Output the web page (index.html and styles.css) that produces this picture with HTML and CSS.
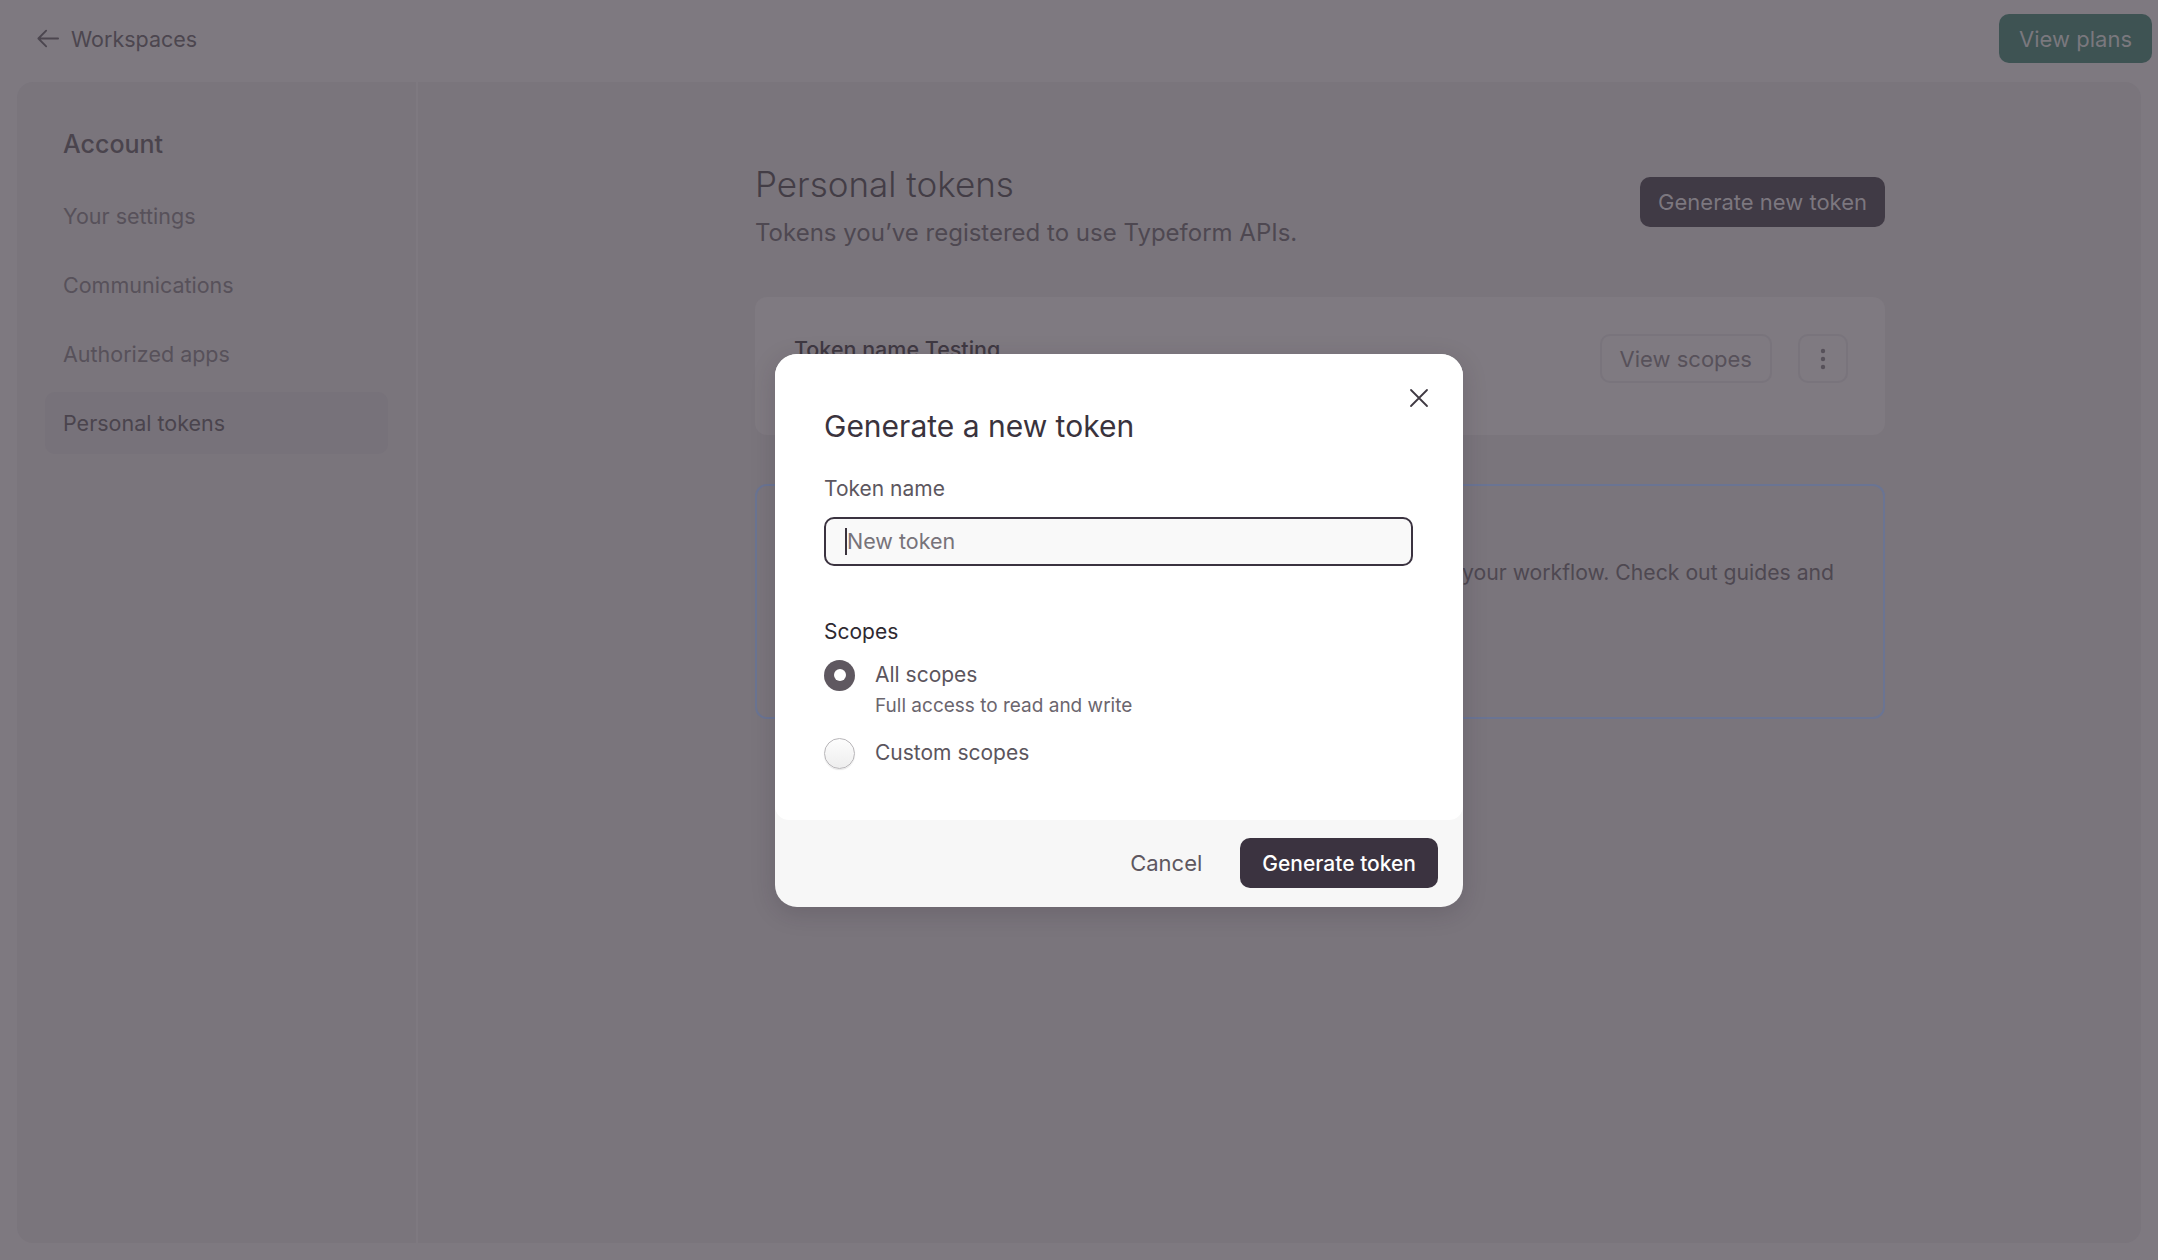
FILE: index.html
```html
<!DOCTYPE html>
<html lang="en">
<head>
    <meta charset="UTF-8">
    <meta name="viewport" content="width=device-width, initial-scale=1.0">
    <title>Personal tokens</title>
    <link rel="stylesheet" href="styles.css">
</head>
<body>
    <header class="topbar">
        <a href="#" class="back-link">
            <svg viewBox="0 0 24 20" fill="none" stroke="currentColor" stroke-width="2" stroke-linecap="round" stroke-linejoin="round">
                <path d="M23 10H1.5M10 1.5L1.5 10l8.5 8.5"/>
            </svg>
            Workspaces
        </a>
        <a href="#" class="plans-btn">View plans</a>
    </header>

    <div class="shell">
        <aside class="sidebar">
            <h3>Account</h3>
            <nav>
                <a href="#">Your settings</a>
                <a href="#">Communications</a>
                <a href="#">Authorized apps</a>
                <a href="#" class="active">Personal tokens</a>
            </nav>
        </aside>

        <main class="content">
            <div class="content-inner">
                <div class="page-head">
                    <div>
                        <h1>Personal tokens</h1>
                        <p>Tokens you’ve registered to use Typeform APIs.</p>
                    </div>
                    <button class="dark-btn">Generate new token</button>
                </div>

                <section class="token-card">
                    <div class="token-info">
                        <div class="token-name">Token name Testing</div>
                        <div class="token-meta">Created on 12 Mar 2024 · Never used</div>
                    </div>
                    <div class="token-actions">
                        <button class="ghost-btn">View scopes</button>
                        <button class="ghost-btn icon-btn" aria-label="More">
                            <svg viewBox="0 0 6 22" fill="currentColor">
                                <circle cx="3" cy="3" r="2.2"/>
                                <circle cx="3" cy="11" r="2.2"/>
                                <circle cx="3" cy="19" r="2.2"/>
                            </svg>
                        </button>
                    </div>
                </section>

                <section class="info-box">
                    <h4>Build with Typeform APIs</h4>
                    <p>Personal tokens let you build custom integrations and automate your workflow. Check out guides and<br>examples in our developer portal.</p>
                    <a href="#" class="info-link">Go to developer docs</a>
                </section>
            </div>
        </main>
    </div>

    <div class="backdrop">
        <div class="modal" role="dialog">
            <div class="modal-body">
                <button class="modal-close" aria-label="Close">
                    <svg viewBox="0 0 20 20" fill="none" stroke="currentColor" stroke-width="1.8" stroke-linecap="round">
                        <path d="M2 2l16 16M18 2L2 18"/>
                    </svg>
                </button>
                <h2>Generate a new token</h2>
                <label class="field-label" for="token-name">Token name</label>
                <div class="input-wrap">
                    <span class="caret"></span>
                    <input id="token-name" type="text" placeholder="New token">
                </div>

                <div class="scopes-title">Scopes</div>
                <div class="radio-row">
                    <span class="radio checked"></span>
                    <span class="radio-text">
                        <span class="radio-label">All scopes</span>
                        <span class="radio-hint">Full access to read and write</span>
                    </span>
                </div>
                <div class="radio-row">
                    <span class="radio"></span>
                    <span class="radio-text">
                        <span class="radio-label">Custom scopes</span>
                    </span>
                </div>
            </div>
            <div class="modal-footer">
                <button class="text-btn">Cancel</button>
                <button class="primary-btn">Generate token</button>
            </div>
        </div>
    </div>
</body>
</html>
```

FILE: styles.css
```css
* {
    box-sizing: border-box;
}

body {
    margin: 0;
    height: 100vh;
    overflow: hidden;
    position: relative;
    background: #7e7980;
    font-family: 'Inter', 'Noto Sans', sans-serif;
    font-size: 22px;
    color: #4a444d;
}

button {
    font-family: inherit;
    cursor: pointer;
}

/* top bar */

.topbar {
    height: 77px;
    display: flex;
    justify-content: space-between;
    align-items: center;
    padding: 0 6px 0 37px;
}

.back-link {
    display: flex;
    align-items: center;
    gap: 12px;
    font-size: 21.5px;
    color: #4c464f;
    text-decoration: none;
}

.back-link svg {
    width: 22px;
    height: 19px;
}

.plans-btn {
    height: 49px;
    padding: 0 20px;
    display: flex;
    align-items: center;
    background: #3e5353;
    color: #7a787e;
    border-radius: 10px;
    text-decoration: none;
}

/* page shell */

.shell {
    margin: 5px 17px 0;
    height: 1161px;
    display: flex;
    background: #7a757c;
    border-radius: 16px;
    overflow: hidden;
}

.sidebar {
    width: 401px;
    flex-shrink: 0;
    border-right: 2px solid #7e7980;
    padding: 47px 28px 0;
}

.sidebar h3 {
    margin: 0 0 26px;
    padding-left: 18px;
    font-size: 25px;
    font-weight: 500;
    line-height: 30px;
    color: #4a444d;
}

.sidebar nav {
    display: flex;
    flex-direction: column;
    gap: 7px;
}

.sidebar nav a {
    height: 62px;
    display: flex;
    align-items: center;
    padding-left: 18px;
    border-radius: 10px;
    font-size: 21.5px;
    color: #57515a;
    text-decoration: none;
}

.sidebar nav a.active {
    background: #77727a;
    color: #4a444d;
}

.content {
    flex: 1;
    padding: 80px 0 0 337px;
}

.content-inner {
    width: 1130px;
}

.page-head {
    display: flex;
    justify-content: space-between;
    align-items: flex-start;
}

.page-head h1 {
    margin: 0;
    font-size: 35px;
    font-weight: 300;
    line-height: 44px;
    color: #433d46;
}

.page-head p {
    margin: 11px 0 0;
    font-size: 24px;
    line-height: 32px;
    color: #4e4851;
}

.dark-btn {
    margin-top: 15px;
    height: 50px;
    padding: 0 18px;
    border: 0;
    border-radius: 10px;
    background: #403a45;
    color: #7c777f;
    font-size: 22px;
}

.token-card {
    margin-top: 48px;
    height: 138px;
    display: flex;
    justify-content: space-between;
    align-items: flex-start;
    padding: 37px 37px 0 39px;
    background: #7f7a81;
    border-radius: 12px;
}

.token-name {
    font-size: 21.5px;
    font-weight: 500;
    line-height: 30px;
    color: #3f3942;
}

.token-meta {
    margin-top: 6px;
    font-size: 19px;
    color: #56505a;
}

.token-actions {
    display: flex;
    gap: 26px;
}

.ghost-btn {
    height: 49px;
    padding: 0 18px;
    background: transparent;
    border: 2px solid #79747c;
    border-radius: 10px;
    color: #57515a;
    font-size: 22px;
}

.icon-btn {
    width: 50px;
    padding: 0;
    display: flex;
    align-items: center;
    justify-content: center;
}

.icon-btn svg {
    width: 6px;
    height: 22px;
}

.info-box {
    margin-top: 49px;
    height: 235px;
    padding: 30px 20px 0 65px;
    border: 2px solid #6a7493;
    border-radius: 12px;
}

.info-box h4 {
    margin: 0 0 8px;
    font-size: 24px;
    font-weight: 500;
    line-height: 32px;
    color: #403a43;
}

.info-box p {
    margin: 0;
    font-size: 21.2px;
    line-height: 32px;
    white-space: nowrap;
    color: #4e4851;
}

.info-link {
    display: inline-block;
    margin-top: 18px;
    color: #403a43;
}

/* modal */

.backdrop {
    position: absolute;
    inset: 0;
    display: flex;
    align-items: center;
    justify-content: center;
    padding-left: 80px;
}

.modal {
    width: 688px;
    background: #f7f7f7;
    border-radius: 22px;
    overflow: hidden;
    box-shadow: 0 6px 24px rgba(40, 30, 45, 0.18);
}

.modal-body {
    position: relative;
    display: flex;
    flex-direction: column;
    padding: 53px 50px 51px 49px;
    background: #ffffff;
    border-radius: 0 0 14px 14px;
}

.modal-close {
    position: absolute;
    top: 34px;
    right: 34px;
    width: 20px;
    height: 20px;
    padding: 0;
    border: 0;
    background: none;
    color: #3f3942;
}

.modal-close svg {
    width: 20px;
    height: 20px;
    display: block;
}

.modal h2 {
    margin: 0;
    font-size: 30px;
    font-weight: 400;
    line-height: 38px;
    color: #3a333d;
}

.field-label {
    margin-top: 29px;
    font-size: 21px;
    line-height: 30px;
    color: #5d5760;
}

.input-wrap {
    position: relative;
    margin-top: 13px;
}

.input-wrap input {
    width: 100%;
    height: 49px;
    padding: 0 0 0 21px;
    border: 2px solid #3b3340;
    border-radius: 10px;
    background: #f9f9f9;
    font-family: inherit;
    font-size: 21.5px;
    color: #3a333d;
    outline: none;
}

.input-wrap input::placeholder {
    color: #77737a;
}

.caret {
    position: absolute;
    left: 21px;
    top: 11px;
    width: 2px;
    height: 27px;
    background: #3a333d;
}

.scopes-title {
    margin-top: 51px;
    font-size: 21px;
    line-height: 30px;
    color: #2e2931;
}

.radio-row {
    display: flex;
    align-items: flex-start;
    gap: 20px;
    margin-top: 13px;
}

.radio-row + .radio-row {
    margin-top: 19px;
}

.radio {
    width: 31px;
    height: 31px;
    flex-shrink: 0;
    border-radius: 50%;
    border: 1px solid #b8b6b9;
    background: linear-gradient(#fdfdfd, #eeeeee);
    box-shadow: 0 1px 1px rgba(0, 0, 0, 0.1);
}

.radio.checked {
    border: 0;
    background: #5f5860;
    display: flex;
    align-items: center;
    justify-content: center;
    box-shadow: none;
}

.radio.checked::after {
    content: '';
    width: 12px;
    height: 12px;
    border-radius: 50%;
    background: #ffffff;
}

.radio-text {
    display: flex;
    flex-direction: column;
}

.radio-label {
    font-size: 21px;
    line-height: 30px;
    color: #5b555d;
}

.radio-hint {
    margin-top: 3px;
    font-size: 19px;
    line-height: 26px;
    color: #6b666e;
}

.modal-footer {
    height: 87px;
    display: flex;
    justify-content: flex-end;
    align-items: center;
    gap: 19px;
    padding-right: 25px;
}

.text-btn {
    height: 50px;
    padding: 0 19px;
    border: 0;
    background: none;
    font-size: 22px;
    color: #5e5760;
}

.primary-btn {
    height: 50px;
    padding: 0 22px;
    border: 0;
    border-radius: 10px;
    background: #3b3340;
    color: #ffffff;
    font-size: 21px;
    font-weight: 500;
}
```
